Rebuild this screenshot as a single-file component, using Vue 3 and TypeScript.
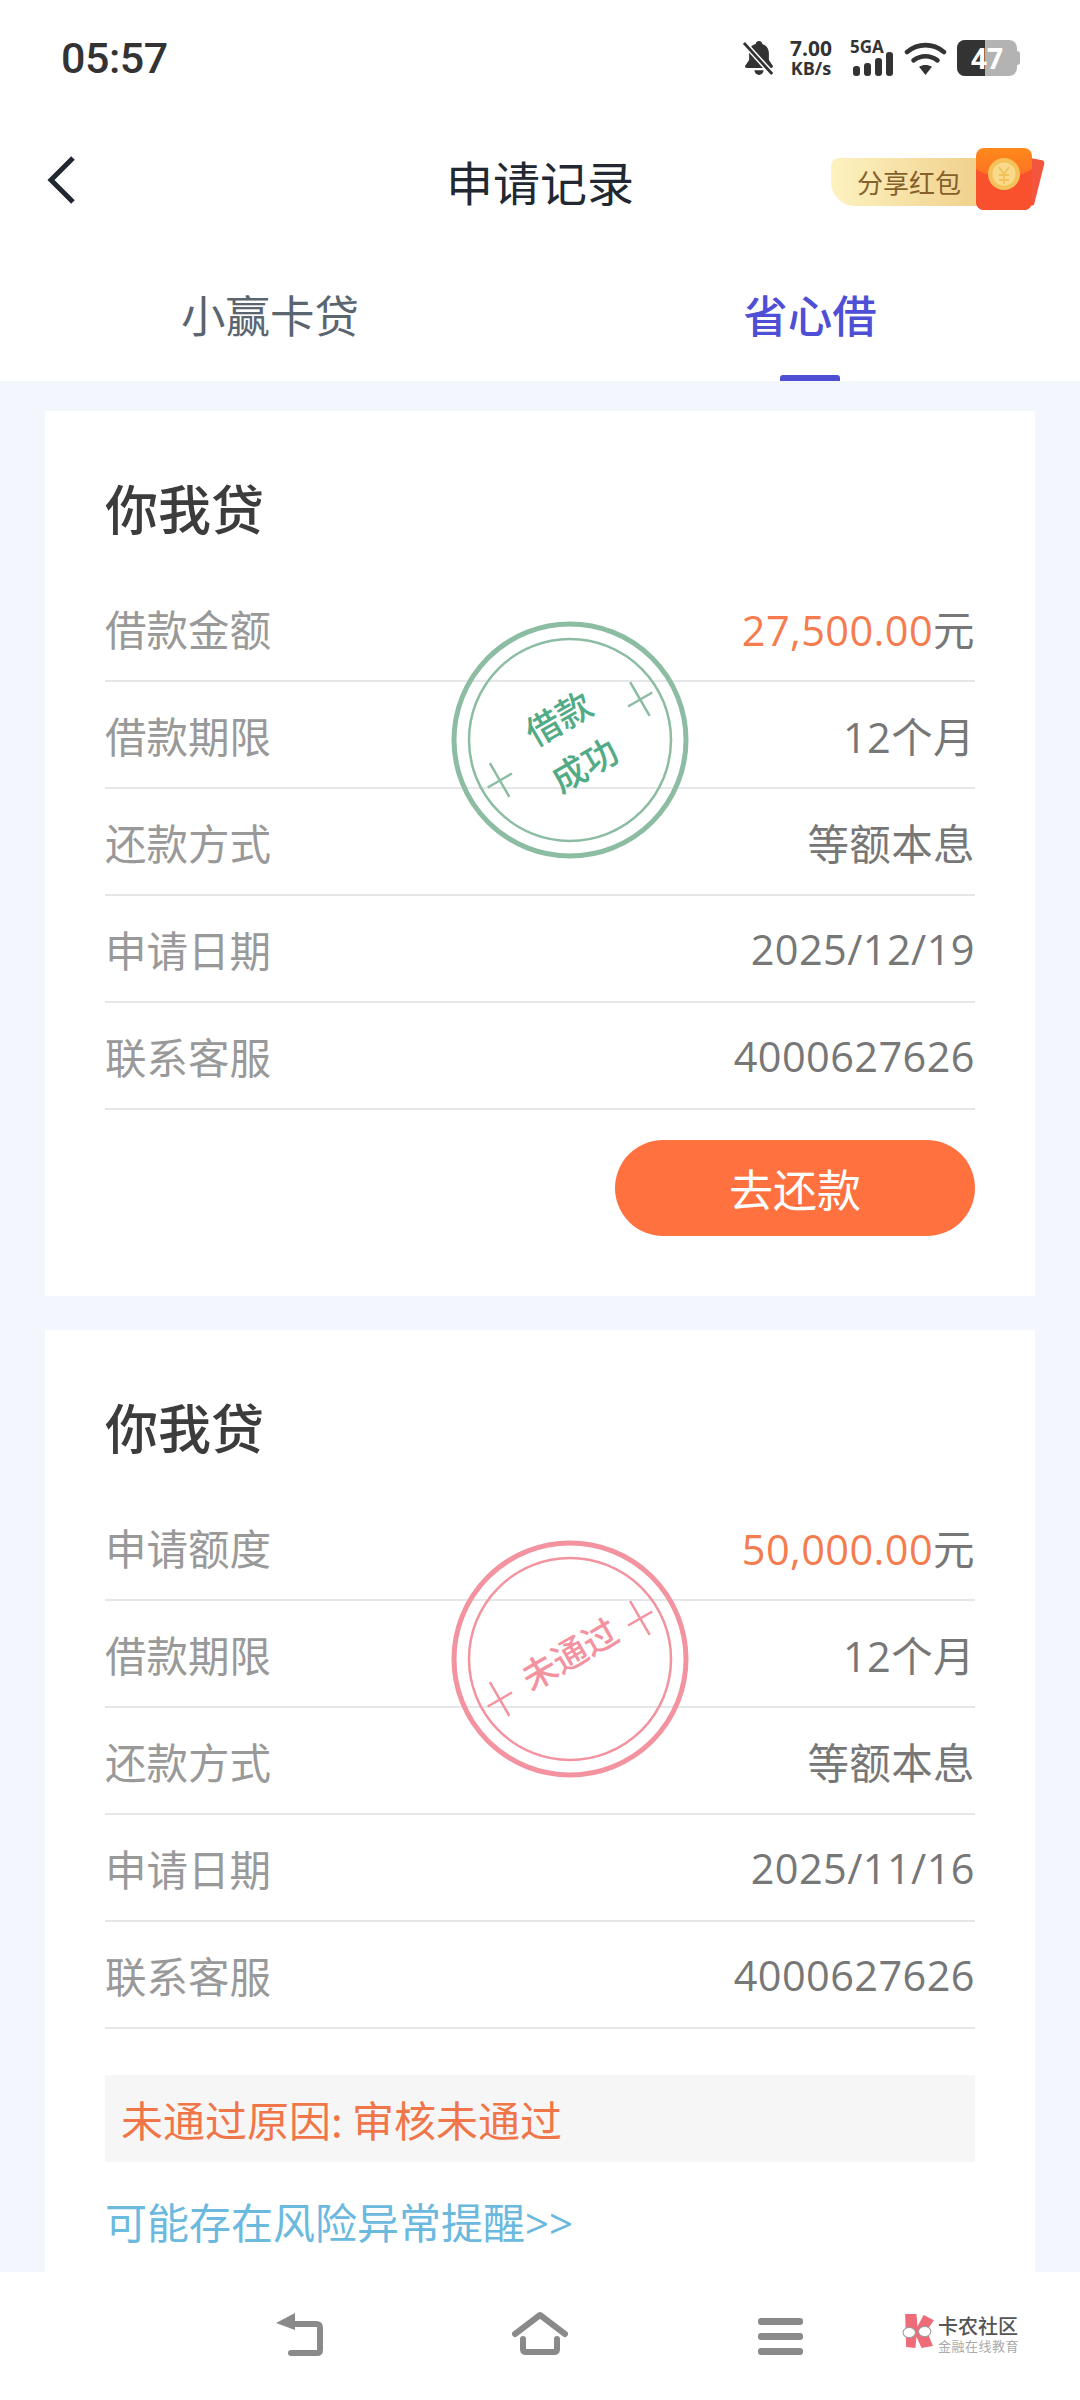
<template>
  <div class="page">
    <div class="status-bar">
      <span class="time">05:57</span>
      <div class="status-icons">
        <svg class="bell" width="32" height="36" viewBox="0 0 34 38">
          <path d="M17 1c2 0 3 1 3.500 3 5 1.500 7 5.500 7 10v7l4 6c.8 1.400 0 2.500-1.500 2.500H4c-1.500 0-2.300-1.100-1.500-2.500l4-6v-8c0-4.500 2-7.500 7-9C14 2 15 1 17 1z" fill="#333" />
          <path d="M12 32h10c-.6 3-2.500 5-5 5s-4.400-2-5-5z" fill="#333" />
          <path d="M1 3l30 33" stroke="#fff" stroke-width="6" />
          <path d="M1 3l30 33" stroke="#333" stroke-width="3" />
        </svg>
        <div class="speed"><span class="speed-num">7.00</span><span class="speed-unit">KB/s</span></div>
        <div class="signal">
          <span class="signal-label">5GA</span>
          <div class="bars">
            <i style="height: 10px"></i><i style="height: 13px"></i><i style="height: 18px"></i><i style="height: 24px"></i>
          </div>
        </div>
        <svg class="wifi" width="43" height="35" viewBox="0 0 46 38">
          <path d="M3 12C15 2 31 2 43 12" fill="none" stroke="#333" stroke-width="5" stroke-linecap="round" />
          <path d="M10 21c8-6 18-6 26 0" fill="none" stroke="#333" stroke-width="5" stroke-linecap="round" />
          <path d="M16 28c4.500-2.500 9.500-2.500 14 0l-7 9z" fill="#333" />
        </svg>
        <div class="battery">
          <div class="battery-fill"></div>
          <span class="battery-num">47</span>
          <div class="battery-tip"></div>
        </div>
      </div>
    </div>

    <div class="nav-bar">
      <svg class="back" width="32" height="48" viewBox="0 0 32 48">
        <path d="M27 2L5 24l22 22" fill="none" stroke="#222831" stroke-width="5" />
      </svg>
      <span class="nav-title">申请记录</span>
      <div class="share">
        <div class="share-label">分享红包</div>
        <svg class="packet" width="72" height="66" viewBox="0 0 72 66">
          <defs>
            <linearGradient id="pk" x1="0" y1="0" x2="0" y2="1">
              <stop offset="0" stop-color="#ff8a1a" />
              <stop offset="1" stop-color="#f9502e" />
            </linearGradient>
          </defs>
          <path d="M50 10l16 3c3 .6 4 2 3 5L59 58l-9 2z" fill="#f4553f" />
          <rect x="1" y="1" width="56" height="62" rx="8" fill="url(#pk)" />
          <path d="M1 22c12 10 44 10 56 0v33a8 8 0 0 1-8 8H9a8 8 0 0 1-8-8z" fill="#f9502e" />
          <circle cx="29" cy="27" r="16" fill="#f3c25a" />
          <circle cx="29" cy="27" r="11.500" fill="#f9d98b" />
          <path d="M24 20l5 7 5-7M24 28h10M24 33h10M29 27v10" stroke="#f3c25a" stroke-width="1.800" fill="none" />
        </svg>
      </div>
    </div>

    <div class="tabs">
      <div v-for="tab in tabs" :key="tab" class="tab" :class="{ active: tab === activeTab }">
        {{ tab }}
      </div>
    </div>

    <div class="content">
      <section v-for="card in cards" :key="card.date" class="card">
        <h2 class="card-title">你我贷</h2>
        <div class="rows">
          <div v-for="row in card.rows" :key="row.label" class="row">
            <span class="row-label">{{ row.label }}</span>
            <span class="row-value">
              <template v-if="row.amount"><em class="amount">{{ row.amount }}</em>元</template>
              <template v-else>{{ row.value }}</template>
            </span>
          </div>

          <svg class="stamp" width="240" height="240" viewBox="0 0 240 240" :style="{ color: card.stampColor }">
            <circle cx="120" cy="120" r="116" fill="none" stroke="currentColor" stroke-width="5" />
            <circle cx="120" cy="120" r="101" fill="none" stroke="currentColor" stroke-width="2.500" />
            <g transform="rotate(-30 120 120)" stroke="currentColor" stroke-width="2.500">
              <path d="M25 120h28M39 100v39" />
              <path d="M187 120h28M201 100v39" />
            </g>
            <g transform="rotate(-30 120 120)" :fill="card.textColor" text-anchor="middle" class="stamp-text">
              <template v-if="card.stampLines.length === 2">
                <text x="121" y="109">{{ card.stampLines[0] }}</text>
                <text x="120" y="162">{{ card.stampLines[1] }}</text>
              </template>
              <text v-else x="122" y="129">{{ card.stampLines[0] }}</text>
            </g>
          </svg>
        </div>

        <button v-if="card.repay" class="repay">去还款</button>
        <template v-else>
          <div class="reason">未通过原因: 审核未通过</div>
          <div class="risk">可能存在风险异常提醒&gt;&gt;</div>
        </template>
      </section>
    </div>

    <div class="bottom-nav">
      <svg class="nav-ico back-ico" width="50" height="44" viewBox="0 0 50 44">
        <path d="M20 1L1 11l19 7z" fill="#8a8a8a" />
        <path d="M14 12h27c3 0 4 1 4 4v22c0 2-1 3-3 3H16" fill="none" stroke="#8a8a8a" stroke-width="6" stroke-linecap="round" />
      </svg>
      <svg class="nav-ico home-ico" width="58" height="46" viewBox="0 0 58 46">
        <path d="M4 24L29 5l25 19" fill="none" stroke="#8a8a8a" stroke-width="6" stroke-linecap="round" stroke-linejoin="round" />
        <path d="M12 29v10c0 2 1 3 3 3h28c2 0 3-1 3-3V29" fill="none" stroke="#8a8a8a" stroke-width="6" stroke-linecap="round" />
      </svg>
      <div class="menu-ico"><i></i><i></i><i></i></div>
      <div class="watermark">
        <svg width="35" height="35" viewBox="0 0 34 34">
          <path d="M4 1l11 0 1 12L22 2l10 5-7 10 6 15-11 2-5-11-1 11-9-1z" fill="#ee6b78" />
          <ellipse cx="8" cy="19" rx="6" ry="5" fill="#fff" stroke="#999" stroke-width="1" />
          <ellipse cx="23" cy="18" rx="6" ry="5" fill="#fff" stroke="#999" stroke-width="1" />
        </svg>
        <div class="wm-text">
          <span class="wm-top">卡农社区</span>
          <span class="wm-bottom">金融在线教育</span>
        </div>
      </div>
    </div>
  </div>
</template>

<script setup lang="ts">
interface Row {
  label: string
  value?: string
  amount?: string
}

interface Card {
  date: string
  rows: Row[]
  stampColor: string
  textColor: string
  stampLines: string[]
  repay: boolean
}

const tabs = ['小赢卡贷', '省心借']
const activeTab = '省心借'

const cards: Card[] = [
  {
    date: '2025/12/19',
    rows: [
      { label: '借款金额', amount: '27,500.00' },
      { label: '借款期限', value: '12个月' },
      { label: '还款方式', value: '等额本息' },
      { label: '申请日期', value: '2025/12/19' },
      { label: '联系客服', value: '4000627626' },
    ],
    stampColor: '#8cbca2',
    textColor: '#52ab85',
    stampLines: ['借款', '成功'],
    repay: true,
  },
  {
    date: '2025/11/16',
    rows: [
      { label: '申请额度', amount: '50,000.00' },
      { label: '借款期限', value: '12个月' },
      { label: '还款方式', value: '等额本息' },
      { label: '申请日期', value: '2025/11/16' },
      { label: '联系客服', value: '4000627626' },
    ],
    stampColor: '#f2939f',
    textColor: '#f2939f',
    stampLines: ['未通过'],
    repay: false,
  },
]
</script>

<style>
html,
body {
  margin: 0;
  background: #fff;
}
</style>

<style scoped>
.page {
  width: 1080px;
  height: 2400px;
  display: flex;
  flex-direction: column;
  overflow: hidden;
  background: #fff;
  font-family: "Noto Sans CJK SC", "Noto Sans", sans-serif;
}

.status-bar {
  height: 116px;
  flex: none;
  display: flex;
  align-items: center;
  justify-content: space-between;
  padding: 0 63px 0 61px;
}

.time {
  font-size: 43px;
  font-weight: 500;
  color: #333;
  font-family: Roboto, sans-serif;
  letter-spacing: -0.5px;
}

.status-icons {
  display: flex;
  align-items: center;
}

.bell {
  margin-right: 14px;
}

.speed {
  display: flex;
  flex-direction: column;
  align-items: center;
  width: 44px;
  margin-right: 17px;
  color: #333;
  font-family: "Open Sans", sans-serif;
  font-weight: 700;
  line-height: 20px;
}

.speed-num {
  font-size: 21px;
}

.speed-unit {
  font-size: 18px;
  white-space: nowrap;
}

.signal {
  position: relative;
  width: 43px;
  height: 36px;
  margin-right: 11px;
}

.signal-label {
  position: absolute;
  left: 0;
  top: -2px;
  font-size: 17px;
  line-height: 18px;
  font-weight: 700;
  color: #333;
  font-family: "Open Sans", sans-serif;
}

.bars {
  position: absolute;
  left: 3px;
  right: 0;
  bottom: 0;
  display: flex;
  align-items: flex-end;
  gap: 4px;
}

.bars i {
  width: 7px;
  border-radius: 3px;
  background: #333;
}

.wifi {
  margin-right: 10px;
}

.battery {
  position: relative;
  width: 60px;
  height: 36px;
  border-radius: 8px;
  background: #b3b3b3;
}

.battery-fill {
  position: absolute;
  left: 0;
  top: 0;
  bottom: 0;
  width: 28px;
  border-radius: 8px 0 0 8px;
  background: #333;
}

.battery-num {
  position: absolute;
  left: 0;
  right: 0;
  top: 0;
  text-align: center;
  line-height: 36px;
  font-size: 28px;
  font-weight: 700;
  color: #fff;
  font-family: "Open Sans", sans-serif;
}

.battery-tip {
  position: absolute;
  right: -3px;
  top: 11px;
  width: 3px;
  height: 14px;
  border-radius: 0 3px 3px 0;
  background: #b3b3b3;
}

.nav-bar {
  position: relative;
  height: 128px;
  flex: none;
  display: flex;
  align-items: center;
  justify-content: center;
}

.back {
  position: absolute;
  left: 46px;
  top: 40px;
}

.nav-title {
  font-size: 47px;
  color: #222831;
}

.share {
  position: absolute;
  left: 831px;
  top: 34px;
  width: 214px;
  height: 66px;
}

.share-label {
  position: absolute;
  left: 0;
  top: 8px;
  width: 150px;
  height: 48px;
  padding-left: 26px;
  box-sizing: border-box;
  border-radius: 8px 0 0 24px;
  background: linear-gradient(90deg, #fdf2c0, #f0d08c);
  font-size: 26px;
  line-height: 48px;
  color: #85602c;
  white-space: nowrap;
}

.packet {
  position: absolute;
  left: 144px;
  top: -3px;
}

.tabs {
  height: 137px;
  flex: none;
  display: flex;
}

.tab {
  flex: 1;
  position: relative;
  padding-top: 8px;
  text-align: center;
  font-size: 44.500px;
  line-height: 124px;
  color: #5b6570;
}

.tab:last-child {
  flex: none;
  width: 540px;
}

.tab.active {
  color: #4f4fd6;
  font-weight: 500;
}

.tab.active::after {
  content: "";
  position: absolute;
  left: 240px;
  bottom: 0;
  width: 60px;
  height: 6px;
  border-radius: 3px 3px 0 0;
  background: #4f4fd6;
}

.content {
  flex: 1;
  min-height: 0;
  overflow: hidden;
  background: #f3f6fd;
  padding: 30px 45px 0;
  display: flex;
  flex-direction: column;
  gap: 34px;
}

.card {
  flex: none;
  background: #fff;
  padding: 65px 60px 60px;
}

.card-title {
  margin: 0 0 37px;
  font-size: 53px;
  line-height: 62px;
  font-weight: 500;
  color: #3c3c3c;
}

.rows {
  position: relative;
}

.row {
  height: 107px;
  box-sizing: border-box;
  display: flex;
  align-items: center;
  justify-content: space-between;
  border-bottom: 2px solid #e4e6e8;
  font-size: 41.500px;
}

.row-label {
  color: #999;
}

.row-value {
  color: #777;
  font-family: "Open Sans", "Noto Sans CJK SC", sans-serif;
  letter-spacing: 0.4px;
}

.amount {
  font-style: normal;
  color: #f47c4f;
}

.stamp {
  position: absolute;
  left: 345px;
  top: 45px;
  pointer-events: none;
}

.stamp-text {
  font-size: 35px;
  font-weight: 500;
  font-family: "Noto Sans CJK SC", sans-serif;
}

.repay {
  display: block;
  margin: 30px 0 0 auto;
  width: 360px;
  height: 96px;
  border: 0;
  border-radius: 48px;
  background: #ff7240;
  color: #fff;
  font-family: inherit;
  font-size: 44px;
}

.reason {
  margin-top: 46px;
  height: 87px;
  padding-left: 16px;
  background: #f6f6f6;
  color: #f0764a;
  font-size: 42px;
  line-height: 87px;
}

.risk {
  margin-top: 36px;
  font-size: 42px;
  line-height: 50px;
  color: #6bb9de;
  font-family: "Open Sans", "Noto Sans CJK SC", sans-serif;
}

.bottom-nav {
  position: relative;
  height: 128px;
  flex: none;
  background: #fff;
}

.nav-ico {
  position: absolute;
}

.back-ico {
  left: 275px;
  top: 40px;
}

.home-ico {
  left: 511px;
  top: 38px;
}

.menu-ico {
  position: absolute;
  left: 758px;
  top: 46px;
  width: 45px;
  display: flex;
  flex-direction: column;
  gap: 8px;
}

.menu-ico i {
  display: block;
  height: 7px;
  border-radius: 3px;
  background: #8a8a8a;
}

.watermark {
  position: absolute;
  left: 901px;
  top: 41px;
  display: flex;
  align-items: flex-start;
  gap: 2px;
}

.wm-text {
  display: flex;
  flex-direction: column;
  padding-top: 3px;
  line-height: 1;
}

.wm-top {
  font-size: 20px;
  font-weight: 500;
  color: #555;
  white-space: nowrap;
}

.wm-bottom {
  margin-top: 3px;
  font-size: 13px;
  letter-spacing: .5px;
  color: #aaa;
  white-space: nowrap;
}
</style>
